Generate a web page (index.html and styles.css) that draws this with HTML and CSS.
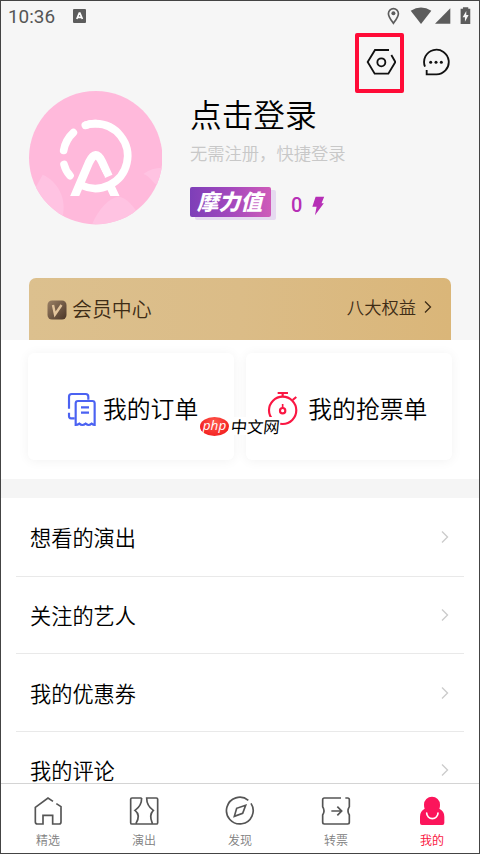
FILE: index.html
```html
<!DOCTYPE html>
<html lang="zh-CN">
<head>
<meta charset="utf-8">
<title>我的</title>
<link rel="stylesheet" href="styles.css">
</head>
<body>
<div class="screen">
  <header class="top">
    <div class="status">
      <span class="clock">10:36</span>
      <svg class="status-app" viewBox="0 0 13 14"><rect width="13" height="14" rx="1" fill="#5c5c5c"/><path d="M3.8 10 6.3 4h.6l2.5 6M5 8.3h3.3" fill="none" stroke="#fff" stroke-width="1.7"/></svg>
      <svg class="status-icons" viewBox="140 18 260 58">
        <path d="M162 70c-9-13-15-20-15-29a15 15 0 0 1 30 0c0 9-6 16-15 29z" fill="none" stroke="#5c5c5c" stroke-width="5"/><circle cx="162" cy="40" r="6" fill="#5c5c5c"/>
        <path d="M214 32q31-19 62 0l-31 40z" fill="#5c5c5c"/><path d="M333 25v46h-46z" fill="#5c5c5c"/>
        <path d="M371 22h16v4h6v46h-29V26h7z" fill="#5c5c5c"/><path d="M381 33v12h7l-11 20V52h-7z" fill="#f6f6f6"/>
      </svg>
    </div>
    <div class="actions">
      <div class="marked">
        <svg class="gear" viewBox="78 143 92 84" fill="none" stroke="#111" stroke-width="5.5"><path d="M147 149h-42l-22 36 21 35h41l21-35-12-21"/><circle cx="124" cy="186" r="12"/></svg>
      </div>
      <svg class="chat" viewBox="246 143 84 84" fill="none" stroke="#111" stroke-width="5.5"><path d="M255 199a37 37 0 1 1 33 23h-28v-13"/><g fill="#111" stroke="none"><circle cx="272" cy="186" r="4.5"/><circle cx="288" cy="186" r="4.5"/><circle cx="304" cy="186" r="4.5"/></g></svg>
    </div>
    <div class="profile">
      <svg class="avatar" viewBox="28 33 400 400">
        <defs><clipPath id="disc"><circle cx="228" cy="233" r="200"/></clipPath><clipPath id="ground"><path d="M100 100h260v248H100z"/></clipPath></defs>
        <circle cx="228" cy="233" r="200" fill="#ffb9db"/>
        <g clip-path="url(#disc)" fill="#ffc3e2"><path d="M69 284c45 20 72 70 60 124l-30 20-60-90z"/><path d="M218 430c20-45 50-77 79-81 20 4 35 18 52 42l-60 50z"/><path d="M371 282c18-14 38-19 60-19v50l-20 2c-14-9-20-26-40-33z"/></g>
        <g fill="none" stroke="#fff" stroke-width="23" stroke-linecap="round"><path d="M196 136Q212 131 228 131A97 97 0 1 1 186 316" stroke-linecap="butt"/><path d="M197 136q15-6 31-5M161 158q-23 21-29 53M133 253q5 20 18 34"/></g>
        <path d="M156 369 208 247Q228 205 247 245L267 289M268 310l29 62" clip-path="url(#ground)" fill="none" stroke="#fff" stroke-width="25"/>
        <path d="M228 240 201 304q31 8 55-12z" fill="#ffb9db"/>
      </svg>
      <div class="info">
        <div class="login">点击登录</div>
        <div class="hint">无需注册，快捷登录</div>
        <div class="power"><span class="badge">摩力值</span><span class="points">0</span><svg class="bolt" viewBox="397 318 38 60"><path d="M408 320h26l-8 20h7l-27 36 5-26h-13z" fill="#b62fb6"/></svg></div>
      </div>
    </div>
    <div class="vip">
      <svg class="vip-icon" viewBox="0 0 20 20"><defs><linearGradient id="v" x2="1" y2="1"><stop stop-color="#9a8065"/><stop offset="1" stop-color="#4b3527"/></linearGradient></defs><rect x=".5" y=".5" width="19" height="19" rx="4.5" fill="url(#v)"/><path d="M6 5 8 14.5l6.5-9.5" fill="none" stroke="#e3c49c" stroke-width="2.4"/></svg>
      <span class="vip-name">会员中心</span><span class="vip-more">八大权益</span>
      <svg class="vip-arrow" viewBox="0 0 8 14"><path d="m1 1.5 5.5 5.5L1 12.5" fill="none" stroke="#3e2c16" stroke-width="1.3"/></svg>
    </div>
  </header>

  <section class="quick">
    <div class="card orders">
      <svg class="order-icon" viewBox="142 141 90 106" fill="none" stroke="#4b62f2" stroke-width="6.5"><path d="M148 191v-36q0-8 8-8h42q8 0 8 8v9M148 203v11q0 6 6 6h11"/><path d="M168 240v-65q0-7 7-7h43q7 0 7 7v65q-4 0-9-4-5 4-9 4t-9-4q-5 4-10 4t-9-4q-5 4-11 4z"/><path d="M184 187h24M184 203h24"/></svg>
      <span>我的订单</span>
    </div>
    <div class="card grabs">
      <svg class="timer-icon" viewBox="231 139 94 104" fill="none" stroke="#fa1743" stroke-width="6.5"><circle cx="278" cy="197" r="41"/><path d="M263 145h31M278 146v11M308 166l11-9"/><path d="M278 178v12" stroke-width="5"/><circle cx="278" cy="198" r="8"/></svg>
      <span>我的抢票单</span>
    </div>
    <div class="watermark"><span class="php">php</span><span class="cn">中文网</span></div>
  </section>

  <main class="list">
    <div class="row"><span>想看的演出</span><svg class="arrow" viewBox="0 0 8 14"><path d="m1 1.5 5.5 5.5L1 12.5"/></svg></div>
    <div class="row"><span>关注的艺人</span><svg class="arrow" viewBox="0 0 8 14"><path d="m1 1.5 5.5 5.5L1 12.5"/></svg></div>
    <div class="row"><span>我的优惠券</span><svg class="arrow" viewBox="0 0 8 14"><path d="m1 1.5 5.5 5.5L1 12.5"/></svg></div>
    <div class="row last"><span>我的评论</span><svg class="arrow" viewBox="0 0 8 14"><path d="m1 1.5 5.5 5.5L1 12.5"/></svg></div>
  </main>

  <nav class="tabs">
    <div class="tab"><svg viewBox="99 168 90 90"><path d="M159 184l-15-10-38 28v44q0 6 6 6h17v-26h29v26h20q5 0 5-6v-46l-14-9"/></svg><span>精选</span></div>
    <div class="tab"><svg viewBox="387 168 90 90"><path d="M425 174h-29q-4 0-4 4v70q0 4 4 4h73q4 0 4-4v-70q0-4-4-4h-29q0 24 20 37-14 14-3 39M425 174q0 24-20 37 18 14 3 39"/></svg><span>演出</span></div>
    <div class="tab"><svg viewBox="-45 168 90 90"><path d="M25 181a40 40 0 1 0 8 9"/><path d="M17 196-10 205-17 229 8 220z"/></svg><span>发现</span></div>
    <div class="tab"><svg viewBox="243 168 90 90"><path d="M303 174h-50q-5 0-5 5v21q8 12 0 25v22q0 5 5 5h70q5 0 5-5v-22q-8-12 0-25v-21q0-5-5-5h-7M274 213h31M292 200l13 13-13 13"/></svg><span>转票</span></div>
    <div class="tab active"><svg viewBox="531 168 90 90"><path class="person" d="M552 194a24 24 0 0 1 48 0c0 6-1 9-2 12q15 7 15 24v19q0 6-6 6h-61q-6 0-6-6v-19q0-17 14-24-2-5-2-12z"/><path class="smile" d="M560 219a17 17 0 0 0 34 0"/></svg><span>我的</span></div>
  </nav>
</div>
</body>
</html>
```
FILE: styles.css
```css
* { box-sizing: border-box; }
body { margin: 0; font-family: "Noto Sans CJK SC", sans-serif; font-weight: 350; color: #000; }
svg { display: block; flex: none; }
.screen { width: 480px; height: 854px; border: 1px solid #444; overflow: hidden; display: flex; flex-direction: column; background: #fff; }
.top { height: 339px; flex: none; background: #f6f6f6; }
.status { height: 31px; display: flex; align-items: center; padding: 0 7px 1px; }
.clock { font: 400 18.9px/30px Roboto, sans-serif; color: #555; width: 65px; padding-top: 1px; }
.status-app { width: 13px; height: 14px; }
.status-icons { width: 86.7px; height: 19.3px; margin-left: auto; margin-right: -1px; }
.actions { display: flex; align-items: center; height: 60px; padding-left: 354px; }
.marked { width: 49px; height: 60px; border: 4px solid #ff0b37; border-radius: 2px; display: flex; align-items: center; justify-content: center; margin-top: 2px; }
.gear { width: 30.7px; height: 28px; margin: -2px 0 0 3px; }
.chat { width: 28px; height: 28px; margin: 0 0 0 17.5px; }
.profile { display: flex; padding: 0 0 0 28px; height: 186px; }
.avatar { width: 133.4px; height: 133.4px; margin-top: -.6px; }
.info { padding-left: 27.6px; margin-top: -2px; }
.login { font-size: 31.7px; line-height: 46px; height: 48px; }
.hint { font-size: 17.3px; line-height: 29px; color: #c8c8c8; }
.power { display: flex; align-items: center; height: 30px; margin-top: 20px; }
.badge { width: 81px; height: 30px; border-radius: 2px; background: linear-gradient(90deg, #7d3fb8, #a348bd 50%, #cf5bb9); box-shadow: 5px 3px 0 #e6daf0; color: #fff; font-weight: 900; font-size: 21.8px; line-height: 27px; text-align: center; font-style: italic; text-indent: -2px; }
.points { font: 500 20px/30px Roboto, sans-serif; color: #b62fb6; margin-left: 20px; margin-top: 5px; }
.bolt { width: 12.5px; height: 20px; margin: 7px 0 0 10px; }
.vip { margin: 0 28px; height: 62px; border-radius: 7px 7px 0 0; background: linear-gradient(90deg, #dcc08e, #dbbc87 50%, #dab679); display: flex; align-items: center; padding: 0 19px 1px 18px; color: #3e2c16; }
.vip-icon { width: 20px; height: 20px; margin-top: 2px; }
.vip-name { font-size: 19.9px; margin-left: 5px; }
.vip-more { font-size: 17.3px; margin-left: auto; margin-top: -4px; }
.vip-arrow { width: 8px; height: 14px; margin-left: 8px; margin-top: -3px; }
.quick { position: relative; height: 139px; flex: none; padding: 13px 27px 18px; display: flex; gap: 12px; }
.card { flex: none; width: 206px; height: 107px; border-radius: 6px; background: #fff; box-shadow: 0 1px 12px rgba(0, 0, 0, .055); display: flex; align-items: center; font-size: 23.8px; padding-top: 6px; }
.card span { margin-top: -4px; }
.orders { padding-left: 39px; }
.grabs { padding-left: 21px; }
.order-icon { width: 30px; height: 35.3px; margin-right: 6px; }
.timer-icon { width: 31.3px; height: 34.7px; margin-right: 10px; margin-top: -2px; }
.watermark { position: absolute; left: 199px; top: 76px; height: 20px; display: flex; align-items: center; }
.php { width: 29px; height: 19px; border-radius: 50%; background: radial-gradient(ellipse at 50% 30%, #ff5a4e, #f32121 75%); color: #fff; font: italic 400 13.5px/16px "Open Sans", sans-serif; text-align: center; }
.cn { font-size: 16.3px; line-height: 18px; font-weight: 400; background: #fff; padding-left: 2px; transform: skewX(-6deg); }
.list { border-top: 19px solid #f5f5f5; height: 304px; flex: none; overflow: hidden; padding: 1px 15px 0; }
.row { height: 77.7px; border-bottom: 1px solid #e9e9e9; display: flex; align-items: center; justify-content: space-between; padding: 0 15px 0 14px; font-size: 21.2px; }
.row span { line-height: 26px; }
.row.last { height: 76px; border-bottom: 0; }
.row.last span { line-height: 22px; margin-top: -1px; }
.arrow { width: 8px; height: 14px; fill: none; stroke: #ccc; stroke-width: 1.4; }
.tabs { flex: 1; border-top: 1px solid #d4d4d4; display: flex; background: #fff; margin: 0 -1px; }
.tab { flex: 1; display: flex; flex-direction: column; align-items: center; padding-top: 12px; font-size: 12px; line-height: 18px; color: #808080; }
.tab svg { width: 30px; height: 30px; fill: none; stroke: #555; stroke-width: 5; margin-bottom: 5px; }
.tab.active { color: #fa1743; font-weight: 400; }
.tab .person { fill: #fb155b; stroke: none; }
.tab .smile { stroke: #fff; stroke-linecap: round; }
```
